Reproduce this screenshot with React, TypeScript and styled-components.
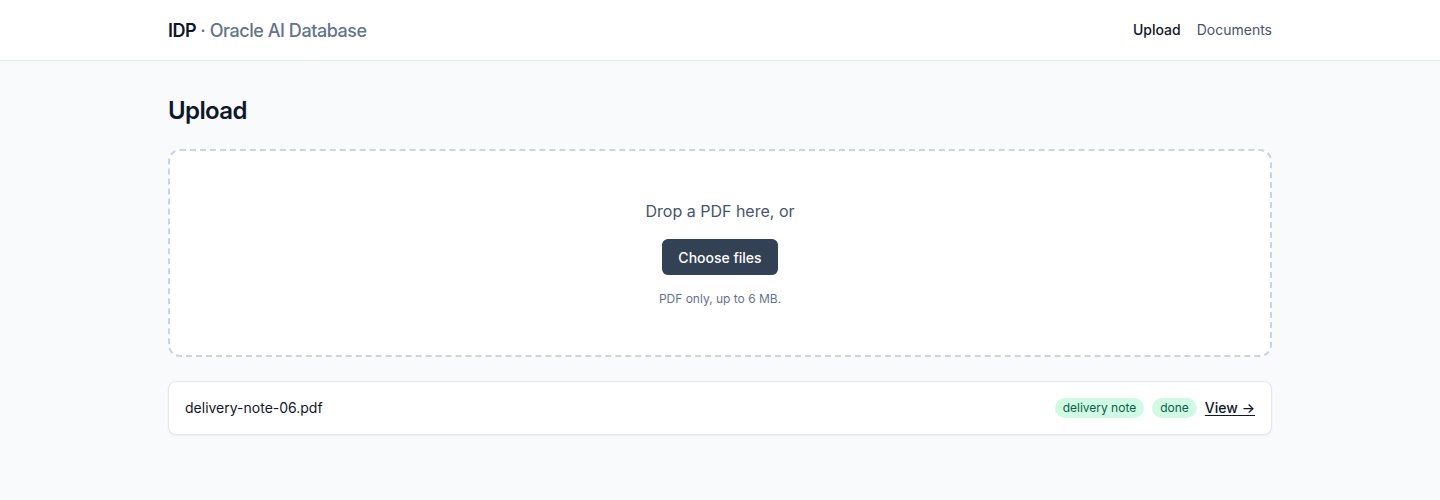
import React from 'react'
import styled, { createGlobalStyle } from 'styled-components'

const GlobalStyle = createGlobalStyle`
  * { box-sizing: border-box; }
  body {
    margin: 0;
    background: #f8fafc;
    font-family: Inter, "Noto Sans", sans-serif;
    color: #0f172a;
    -webkit-font-smoothing: antialiased;
  }
`

const Header = styled.header`
  background: #ffffff;
  border-bottom: 1px solid #e2e8f0;
`

const Bar = styled.div`
  max-width: 1152px;
  margin: 0 auto;
  padding: 0 24px;
  height: 60px;
  display: flex;
  align-items: center;
  justify-content: space-between;
`

const Brand = styled.div`
  font-size: 18px;
  font-weight: 600;
  color: #0f172a;
  letter-spacing: -0.025em;
`

const BrandSub = styled.span`
  color: #64748b;
  font-weight: 500;
`

const Nav = styled.nav`
  display: flex;
  gap: 16px;
`

const NavLink = styled.a<{ $active?: boolean }>`
  font-size: 14px;
  line-height: 20px;
  color: ${(p) => (p.$active ? '#0f172a' : '#475569')};
  font-weight: ${(p) => (p.$active ? 500 : 400)};
  text-decoration: none;
  cursor: pointer;
`

const Main = styled.main`
  max-width: 1152px;
  margin: 0 auto;
  padding: 34px 24px 32px;
`

const Title = styled.h1`
  margin: 0 0 22px;
  font-size: 24px;
  line-height: 32px;
  font-weight: 600;
  letter-spacing: -0.025em;
`

const DropZone = styled.div`
  background: #ffffff;
  border: 2px dashed #cbd5e1;
  border-radius: 12px;
  padding: 48px;
  display: flex;
  flex-direction: column;
  align-items: center;
  text-align: center;
`

const DropText = styled.p`
  margin: 0;
  font-size: 16px;
  line-height: 24px;
  color: #475569;
`

const ChooseButton = styled.button`
  margin-top: 16px;
  height: 36px;
  padding: 0 16px;
  border: none;
  border-radius: 6px;
  background: #334155;
  color: #ffffff;
  font-family: inherit;
  font-size: 14px;
  font-weight: 500;
  cursor: pointer;
`

const Hint = styled.p`
  margin: 16px 0 0;
  font-size: 12px;
  line-height: 16px;
  color: #64748b;
`

const FileList = styled.ul`
  list-style: none;
  margin: 24px 0 0;
  padding: 0;
`

const FileRow = styled.li`
  display: flex;
  align-items: center;
  justify-content: space-between;
  background: #ffffff;
  border: 1px solid #e2e8f0;
  border-radius: 8px;
  box-shadow: 0 1px 2px rgba(15, 23, 42, 0.05);
  padding: 16px;
`

const FileName = styled.span`
  font-size: 14px;
  line-height: 20px;
  color: #0f172a;
`

const Meta = styled.div`
  display: flex;
  align-items: center;
  gap: 8px;
`

const Badge = styled.span`
  font-size: 12px;
  line-height: 16px;
  padding: 2px 8px;
  border-radius: 9999px;
  background: #d1fae5;
  color: #065f46;
`

const ViewLink = styled.a`
  font-size: 14px;
  line-height: 20px;
  font-weight: 500;
  color: #0f172a;
  text-decoration: underline;
  text-underline-offset: 2px;
  cursor: pointer;
`

export default function App() {
  return (
    <>
      <GlobalStyle />
      <Header>
        <Bar>
          <Brand>
            IDP <BrandSub>· Oracle AI Database</BrandSub>
          </Brand>
          <Nav>
            <NavLink $active>Upload</NavLink>
            <NavLink>Documents</NavLink>
          </Nav>
        </Bar>
      </Header>
      <Main>
        <Title>Upload</Title>
        <DropZone>
          <DropText>Drop a PDF here, or</DropText>
          <ChooseButton>Choose files</ChooseButton>
          <Hint>PDF only, up to 6 MB.</Hint>
        </DropZone>
        <FileList>
          <FileRow>
            <FileName>delivery-note-06.pdf</FileName>
            <Meta>
              <Badge>delivery note</Badge>
              <Badge>done</Badge>
              <ViewLink>View →</ViewLink>
            </Meta>
          </FileRow>
        </FileList>
      </Main>
    </>
  )
}
